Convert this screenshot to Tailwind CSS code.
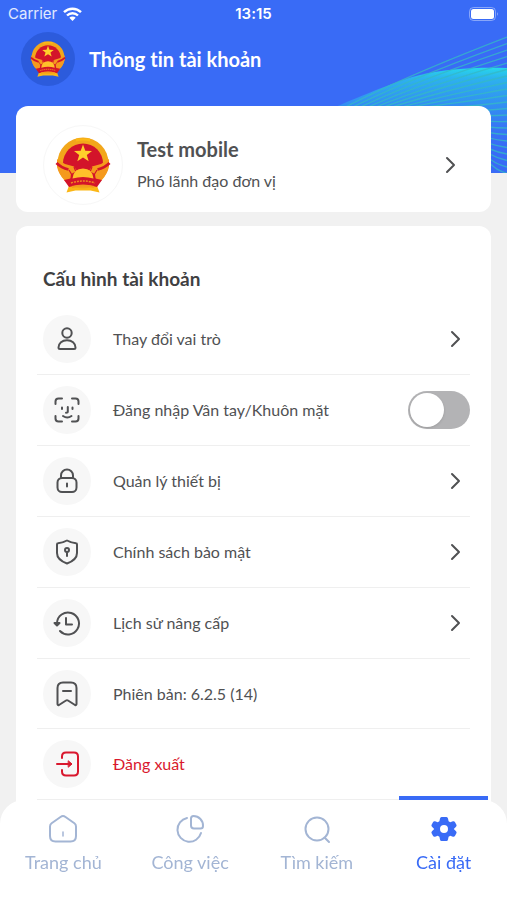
<!DOCTYPE html>
<html lang="vi">
<head>
    <meta charset="UTF-8">
    <meta name="viewport" content="width=device-width, initial-scale=1.0">
    <title>Thông tin tài khoản</title>
    <script src="https://cdn.jsdelivr.net/npm/@tailwindcss/browser@4"></script>
</head>
<body class="min-h-screen bg-[#f1f1f1] text-[#505153] font-['Lato','Noto_Sans',sans-serif] [font-variant-ligatures:none]">
    <!-- Emblem shared by the header and the profile card -->
    <svg class="hidden">
        <symbol id="emblem" viewBox="0 0 56 56">
            <path d="M15 46l-3.500 9.500 9-2h15l9 2L41 46z" fill="#fbb716"/>
            <circle cx="28" cy="26" r="25.500" fill="#f2a71b"/>
            <circle cx="28" cy="26.500" r="20" fill="#d3142a"/>
            <path d="M21 1.500h14v3q-7-2-14 0z" fill="#fbb716"/>
            <path d="M2 22l8 5 9 2.500 3 4.500-6 3-1 8-5-2q-6-5-8-13zM54 22l-8 5-9 2.500-3 4.500 6 3 1 8 5-2q6-5 8-13z" fill="#f59a1d"/>
            <path d="M1.500 26q5 5 12 6.500M54.500 26q-5 5-12 6.500" stroke="#d3142a" stroke-width="2.800" fill="none"/>
            <path d="M19 30l2 5M37 30l-2 5M14 33l3 5M42 33l-3 5" stroke="#d3142a" stroke-width="1.200" fill="none"/>
            <path d="M28 7.500l2.300 6.200 6.700.2-5.200 4.100 1.900 6.300L28 20.600l-5.700 3.700 1.900-6.300-5.200-4.100 6.700-.2z" fill="#ffcf2b"/>
            <path d="M9 43q6-1 10-3 9 4 18 0 4 2 10 3l-5 7q-14-4-28 0z" fill="#d3142a"/>
            <path d="M17.500 41.500q1-10 10.500-10t10.500 10q-10.500-3-21 0z" fill="#ffc02a"/>
            <path d="M16 46q12-4 24 0" stroke="#f08a1e" stroke-width="1.500" stroke-dasharray="2 1" fill="none"/>
            <path d="M17 50q11-3 22 0" stroke="#f59a1d" stroke-width="2" fill="none"/>
        </symbol>
        <symbol id="chevron" viewBox="0 0 12 18">
            <path d="M2 2l7 7-7 7" fill="none" stroke="currentColor" stroke-width="2" stroke-linecap="round" stroke-linejoin="round"/>
        </symbol>
    </svg>

    <header class="relative h-[173px] overflow-hidden bg-[#396bf6] text-white">
        <svg id="waves" class="absolute right-0 top-0 h-[173px] w-[180px]" viewBox="327 0 180 173" fill="none">
            <defs>
                <linearGradient id="glow" x1="0" y1="68" x2="0" y2="155" gradientUnits="userSpaceOnUse">
                    <stop offset="0" stop-color="#27d7ea"/>
                    <stop offset=".12" stop-color="#2bbfec" stop-opacity=".85"/>
                    <stop offset=".5" stop-color="#2f9ff0" stop-opacity=".55"/>
                    <stop offset="1" stop-color="#396bf6" stop-opacity="0"/>
                </linearGradient>
            </defs>
            <path d="M333 108C375 90 400 80 420 75 445 69 475 67 507 68V173H333z" fill="url(#glow)"/>
        </svg>

        <div class="relative grid h-7 grid-cols-3 items-center px-2 font-['Inter','Noto_Sans',sans-serif] text-[15px]">
            <div class="flex items-center gap-1.5 text-white/85">
                <span>Carrier</span>
                <svg class="h-3.5 w-[19px] text-white" viewBox="0 0 19 14" fill="none" stroke="currentColor" stroke-width="2.400">
                    <path d="M1 5.200a12.200 12.200 0 0 1 17 0M4 8.500a7.900 7.900 0 0 1 11 0"/>
                    <path d="M9.500 14L6.300 10.700a4.600 4.600 0 0 1 6.400 0z" fill="currentColor" stroke="none"/>
                </svg>
            </div>
            <time class="text-center font-semibold">13:15</time>
            <svg class="h-3.5 w-[30px] justify-self-end" viewBox="0 0 30 14">
                <rect x=".5" y=".5" width="26" height="13" rx="4" fill="none" stroke="#fff" stroke-opacity=".4"/>
                <rect x="2" y="2" width="23" height="10" rx="2.500" fill="#fff"/>
                <path d="M28 5v4q1.800-2 0-4z" fill="#fff" fill-opacity=".5"/>
            </svg>
        </div>

        <div class="relative mt-1 flex items-center gap-3.5 px-[21px]">
            <span class="flex size-[54px] items-center justify-center rounded-full bg-[#2c5bdc]">
                <svg class="size-9"><use href="#emblem"/></svg>
            </span>
            <h1 class="text-xl font-bold">Thông tin tài khoản</h1>
        </div>
    </header>

    <main class="relative -mt-[67px] flex flex-col gap-3.5 px-4">
        <a href="#" class="flex h-[106px] items-center rounded-xl bg-white pt-3 pl-[27px] pr-[34px]">
            <span class="flex size-20 items-center justify-center rounded-full border border-[#f7f7f7]">
                <svg class="size-14"><use href="#emblem"/></svg>
            </span>
            <span class="ml-3.5 flex flex-1 flex-col gap-1">
                <strong class="text-xl leading-7 font-bold">Test mobile</strong>
                <span class="text-base leading-7">Phó lãnh đạo đơn vị</span>
            </span>
            <svg class="h-[18px] w-3"><use href="#chevron"/></svg>
        </a>

        <section class="rounded-t-xl bg-white px-[21px] pt-9 pb-[100px]">
            <h2 class="mb-2 px-1.5 text-[19px] leading-[34px] font-bold text-[#3f4042]">Cấu hình tài khoản</h2>
            <ul class="divide-y divide-[#efefef] border-b border-[#efefef]">
                <li>
                    <a href="#" class="flex h-[70px] items-center gap-[22px] px-1.5">
                        <span class="flex size-12 items-center justify-center rounded-full bg-[#f7f7f7]">
                            <svg class="size-7" viewBox="0 0 28 28" fill="none" stroke="currentColor" stroke-width="2">
                                <circle cx="14" cy="8" r="4.700"/>
                                <path d="M5.500 22.500c0-4.500 3.700-7.300 8.500-7.300s8.500 2.800 8.500 7.300q0 1.500-1.500 1.500H7q-1.500 0-1.500-1.500z"/>
                            </svg>
                        </span>
                        <span class="flex-1">Thay đổi vai trò</span>
                        <svg class="mr-0.5 h-[18px] w-3"><use href="#chevron"/></svg>
                    </a>
                </li>
                <li>
                    <label for="biometric" class="flex h-[70px] items-center gap-[22px] pl-1.5">
                        <span class="flex size-12 items-center justify-center rounded-full bg-[#f7f7f7]">
                            <svg class="size-7" viewBox="0 0 28 28" fill="none" stroke="currentColor" stroke-width="2" stroke-linecap="round">
                                <path d="M2.500 8V5.500q0-3 3-3H9M19 2.500h3.500q3 0 3 3V8M25.500 20v2.500q0 3-3 3H19M9 25.500H5.500q-3 0-3-3V20"/>
                                <path d="M9 11.500v1.500M19.500 11.500v1.500M14.800 11v4.500q0 1.200-1.800 1.200M10 20q4.300 3 8.500 0"/>
                            </svg>
                        </span>
                        <span class="flex-1">Đăng nhập Vân tay/Khuôn mặt</span>
                        <input id="biometric" type="checkbox" role="switch" class="h-[38px] w-[62px] appearance-none rounded-full bg-[#b3b3b5] p-0.5 before:block before:size-[34px] before:rounded-full before:bg-white before:shadow checked:bg-[#396bf6] checked:before:ml-6">
                    </label>
                </li>
                <li>
                    <a href="#" class="flex h-[70px] items-center gap-[22px] px-1.5">
                        <span class="flex size-12 items-center justify-center rounded-full bg-[#f7f7f7]">
                            <svg class="size-7" viewBox="0 0 28 28" fill="none" stroke="currentColor" stroke-width="2" stroke-linecap="round">
                                <rect x="4.500" y="11" width="19" height="14" rx="4.500"/>
                                <path d="M8 11V8.500a6 6 0 0 1 12 0V11M14 16.500v3"/>
                            </svg>
                        </span>
                        <span class="flex-1">Quản lý thiết bị</span>
                        <svg class="mr-0.5 h-[18px] w-3"><use href="#chevron"/></svg>
                    </a>
                </li>
                <li>
                    <a href="#" class="flex h-[70px] items-center gap-[22px] px-1.5">
                        <span class="flex size-12 items-center justify-center rounded-full bg-[#f7f7f7]">
                            <svg class="size-7" viewBox="0 0 28 28" fill="none" stroke="currentColor" stroke-width="2" stroke-linecap="round" stroke-linejoin="round">
                                <path d="M14 2.500q4.500 2.500 9 2.800 1 0 1 1.200v8.500c0 5-4.500 8.500-10 10.500C8.500 23.500 4 20 4 15V6.500q0-1.200 1-1.200 4.500-.3 9-2.800z"/>
                                <circle cx="14" cy="12" r="2"/>
                                <path d="M14 14.500v3.500"/>
                            </svg>
                        </span>
                        <span class="flex-1">Chính sách bảo mật</span>
                        <svg class="mr-0.5 h-[18px] w-3"><use href="#chevron"/></svg>
                    </a>
                </li>
                <li>
                    <a href="#" class="flex h-[70px] items-center gap-[22px] px-1.5">
                        <span class="flex size-12 items-center justify-center rounded-full bg-[#f7f7f7]">
                            <svg class="size-7" viewBox="0 0 28 28" fill="none" stroke="currentColor" stroke-width="2" stroke-linecap="round" stroke-linejoin="round">
                                <path d="M4 14a11 11 0 1 1 3 8"/>
                                <path d="M1.500 14h5L4 16.500z"/>
                                <path d="M13 9v6.500h6"/>
                            </svg>
                        </span>
                        <span class="flex-1">Lịch sử nâng cấp</span>
                        <svg class="mr-0.5 h-[18px] w-3"><use href="#chevron"/></svg>
                    </a>
                </li>
                <li class="flex h-[70px] items-center gap-[22px] px-1.5">
                    <span class="flex size-12 items-center justify-center rounded-full bg-[#f7f7f7]">
                        <svg class="size-7" viewBox="0 0 28 28" fill="none" stroke="currentColor" stroke-width="2" stroke-linecap="round" stroke-linejoin="round">
                            <path d="M4.500 24V8q0-5.500 5.500-5.500h8q5.500 0 5.500 5.500v16q0 1.500-1.500 1l-7-4.500q-1-.6-2 0l-7 4.500q-1.500.5-1.500-1zM10 11h8"/>
                        </svg>
                    </span>
                    <span class="flex-1">Phiên bản: 6.2.5 (14)</span>
                </li>
                <li>
                    <button type="button" class="flex h-[70px] w-full items-center gap-[22px] px-1.5 text-left text-[#d9182e]">
                        <span class="flex size-12 items-center justify-center rounded-full bg-[#f7f7f7]">
                            <svg class="size-7" viewBox="0 0 28 28" fill="none" stroke="currentColor" stroke-width="2" stroke-linecap="round" stroke-linejoin="round">
                                <path d="M9 8V6.500q0-4 4-4h8q4 0 4 4v15q0 4-4 4h-8q-4 0-4-4V20M4 14h14"/>
                                <path d="M15.500 11l3.500 3-3.500 3z" fill="currentColor" stroke-width="1"/>
                            </svg>
                        </span>
                        <span class="flex-1">Đăng xuất</span>
                    </button>
                </li>
            </ul>
        </section>
    </main>

    <nav class="fixed inset-x-0 bottom-0 h-[100px] rounded-t-3xl bg-white text-lg text-[#a3b5d4]">
        <ul class="grid h-full grid-cols-4">
            <li>
                <a href="#" class="flex flex-col items-center gap-1 pt-3.5">
                    <svg class="size-[30px]" viewBox="0 0 30 30" fill="none" stroke="currentColor" stroke-width="2" stroke-linecap="round" stroke-linejoin="round">
                        <path d="M2 12.500q0-2 1.600-3.200L12.500 3q2.500-1.800 5 0l8.900 6.300Q28 10.500 28 12.500V22q0 5.500-5.500 5.500h-15Q2 27.500 2 22z"/>
                        <path d="M15 18v4" stroke-width="1.500"/>
                    </svg>
                    <span>Trang chủ</span>
                </a>
            </li>
            <li>
                <a href="#" class="flex flex-col items-center gap-1 pt-3.5">
                    <svg class="size-[30px]" viewBox="0 0 30 30" fill="none" stroke="currentColor" stroke-width="2" stroke-linecap="round" stroke-linejoin="round">
                        <path d="M12 4A12 12 0 1 0 26 19"/>
                        <path d="M16 4.500q0-2.500 2.500-2.500A9.500 9.500 0 0 1 28 12q0 2.500-2.500 2.500H19q-3 0-3-3z"/>
                    </svg>
                    <span>Công việc</span>
                </a>
            </li>
            <li>
                <a href="#" class="flex flex-col items-center gap-1 pt-3.5">
                    <svg class="size-[30px]" viewBox="0 0 30 30" fill="none" stroke="currentColor" stroke-width="2" stroke-linecap="round">
                        <circle cx="15" cy="15" r="11.500"/>
                        <path d="M22.500 23.500l4.500 4.500"/>
                    </svg>
                    <span>Tìm kiếm</span>
                </a>
            </li>
            <li class="relative">
                <span class="absolute inset-x-[19px] -top-1 h-1 bg-[#396bf6]"></span>
                <a href="#" aria-current="page" class="flex flex-col items-center gap-1 pt-3.5 text-[#396bf6]">
                    <svg class="size-[30px]" viewBox="0 0 30 30">
                        <path fill="currentColor" fill-rule="evenodd" d="M12.500 3h5q1.200 0 1.500 1.500l.6 2.700 1.700 1 2.600-.9q1.400-.4 2 .7l1.500 2.700q.6 1.200-.4 2L24.800 15l2.200 2.300q1 .9.400 2l-1.500 2.700q-.6 1.100-2 .7l-2.600-.9-1.700 1-.6 2.700Q18.700 27 17.500 27h-5q-1.200 0-1.500-1.500l-.6-2.700-1.700-1-2.600.9q-1.400.4-2-.7l-1.500-2.700q-.6-1.100.4-2L5.200 15 3 12.700q-1-.8-.4-2L4.100 8q.6-1.100 2-.7l2.600.9 1.700-1 .6-2.700Q11.300 3 12.500 3zM15 11a4 4 0 1 0 0 8 4 4 0 0 0 0-8z"/>
                    </svg>
                    <span>Cài đặt</span>
                </a>
            </li>
        </ul>
    </nav>

    <script>
        // Fan of thin lines behind the profile card
        const waves = document.getElementById('waves');
        for (let i = 0; i < 22; i++) {
            const path = document.createElementNS('http://www.w3.org/2000/svg', 'path');
            const endY = 37 + i * 6.500;
            path.setAttribute('d', `M${336 + i * 7} 112C${380 + i * 5} ${88 + i * 2} ${450 + i} ${endY + 22 - i * 1.600} 507 ${endY}`);
            path.setAttribute('stroke', '#35b9c6');
            path.setAttribute('stroke-width', '1.3');
            path.setAttribute('stroke-opacity', '.8');
            waves.appendChild(path);
        }
    </script>
</body>
</html>
